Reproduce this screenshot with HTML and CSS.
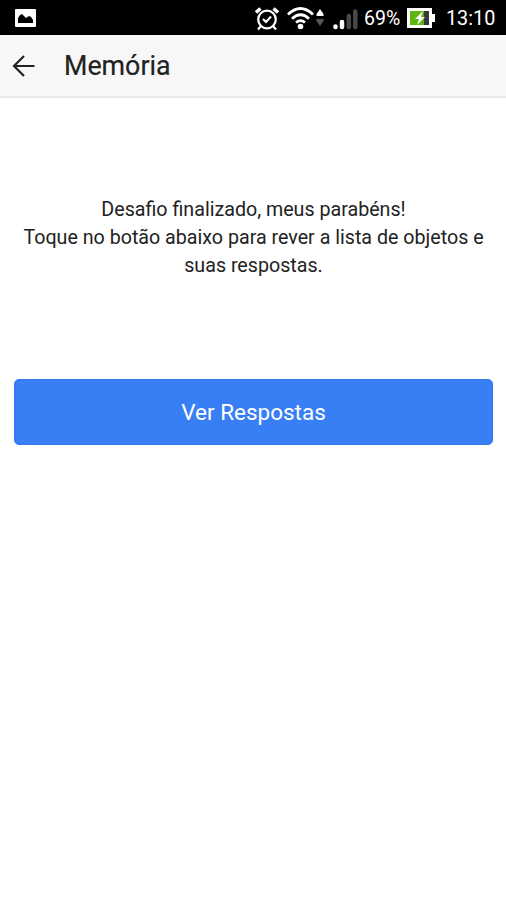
FILE: index.html
```html
<!DOCTYPE html>
<html lang="pt-BR">
<head>
<meta charset="utf-8">
<title>Memória</title>
<link rel="stylesheet" href="styles.css">
</head>
<body>
<div class="status">
  <svg class="status-photo" width="21" height="18" viewBox="0 0 21 18"><rect width="21" height="18" rx="1" fill="#fff"/><path d="M3 14V9l2-3 2-1 4 4 3-2 2 1 2 3v3z" fill="#000"/></svg>
  <svg class="status-alarm" width="24" height="24" viewBox="0 0 24 24" fill="none" stroke="#fff" stroke-width="2.200"><circle cx="12" cy="12.5" r="8.8"/><path d="M1 5.5 5.5 1.5M23 5.5 18.5 1.5" stroke-width="3.4"/><path d="M6 19 3 22.5M18 19l3 3.5M8 12l3 3 5-5.5"/></svg>
  <svg class="status-wifi" width="27" height="24" viewBox="0 0 27 24" fill="none" stroke="#fff" stroke-width="2.8"><path d="M1 8.5Q13.5-3.5 26 8.5M5 12.7q8.500-7.800 17 0M9 16.500q4.500-3.800 9 0"/><circle cx="13.500" cy="20.500" r="2.800" fill="#fff" stroke="none"/></svg>
  <svg class="status-data" width="8" height="18" viewBox="0 0 8 18"><path d="M4 0 7.500 5v2h-7V5z" fill="#fff"/><path d="M.5 10h7v2L4 17 .5 12z" fill="#555"/></svg>
  <svg class="status-signal" width="25" height="22" viewBox="0 0 25 22" stroke-width="4.500" stroke-linecap="round"><path d="M2.500 17.500v.5M9 13v5" stroke="#fff"/><path d="M15.800 7v11M22.300 2.500v15.500" stroke="#484848"/></svg>
  <span class="status-percent">69%</span>
  <svg class="status-battery" width="28" height="20" viewBox="0 0 28 20"><path d="M0 0h25v6h3v8h-3v6H0z" fill="#fff"/><path d="M3 3h14v14H3z" fill="#5fb512"/><path d="M17 3h5v14h-5z" fill="#383838"/><path d="m16 3-8 8h4l-2 6 8-8h-4z" fill="#fff"/></svg>
  <span class="status-time">13:10</span>
</div>
<header class="toolbar">
  <svg width="23" height="22" viewBox="0 0 23 22" fill="none" stroke="#222" stroke-width="2.200"><path d="M12 1 2 11l10 10M2 11h20.500"/></svg>
  <h1 class="title">Memória</h1>
</header>
<main class="content">
  <p class="message">Desafio finalizado, meus parabéns!<br>Toque no botão abaixo para rever a lista de objetos e<br>suas respostas.</p>
  <button class="answers">Ver Respostas</button>
</main>
</body>
</html>
```
FILE: styles.css
```css
* { box-sizing: border-box; }
body { margin: 0; min-height: 900px; background: #fff; color: #222; font-family: Roboto, sans-serif; }
svg { display: block; flex: none; }
.status { display: flex; align-items: center; height: 35px; padding-left: 15px; background: #000; color: #fff; font-size: 20px; line-height: 24px; white-space: nowrap; }
.status-alarm { margin: 2px 0 0 219px; }
.status-wifi { margin-left: 8px; }
.status-data { margin-left: 2px; }
.status-signal { margin: 4px 0 0 9px; }
.status-percent { width: 38px; margin: 3px 0 0 6px; font-size: 19.500px; }
.status-battery { margin: 1px 0 0 5px; }
.status-time { margin: 3px 0 0 11px; font-size: 19.800px; }
.toolbar { display: flex; align-items: center; height: 63px; padding: 1px 0 0 12px; background: #f7f7f7; border-bottom: 2px solid #e8e8e8; }
.title { margin: 0 0 0 29px; font-size: 26.800px; line-height: 32px; font-weight: 400; -webkit-text-stroke: .2px #222; }
.content { padding: 98px 13px 0 14px; }
.message { margin: 0; font-size: 19.670px; line-height: 28px; text-align: center; white-space: nowrap; }
.answers { display: flex; align-items: center; justify-content: center; width: 100%; height: 66px; margin: 98.500px 0 0; padding: 0; border: 1px solid #2f77ee; border-radius: 5px; background: #387ef5; color: #fff; font: 400 22.500px/28px Roboto, sans-serif; }
```
